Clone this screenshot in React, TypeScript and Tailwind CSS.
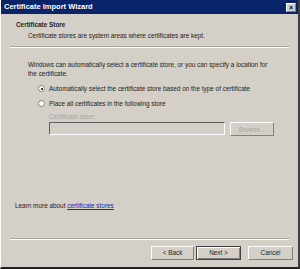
const font = { fontFamily: '"Liberation Sans", Arial, sans-serif' };

function Radio({ checked }: { checked?: boolean }) {
  return (
    <span className="relative inline-block h-[7px] w-[7px] shrink-0 rounded-full border border-[#808080] bg-white">
      {checked && (
        <span className="absolute left-[1.5px] top-[1.5px] h-[2px] w-[2px] rounded-full bg-black" />
      )}
    </span>
  );
}

function Btn({
  label,
  primary,
  disabled,
  className,
}: {
  label: string;
  primary?: boolean;
  disabled?: boolean;
  className?: string;
}) {
  return (
    <div
      className={`flex h-[14px] items-center justify-center border bg-[#d4d0c8] text-[6.4px] ${
        primary ? "border-[#404040] shadow-[inset_1px_1px_0_#fff,inset_-1px_-1px_0_#808080]" : "border-[#808080] border-l-white border-t-white"
      } ${disabled ? "text-[#a8a5a0]" : "text-[#222]"} ${className ?? ""}`}
    >
      {label}
    </div>
  );
}

export default function App() {
  return (
    <div
      className="flex h-[269px] w-[300px] flex-col border-b-2 border-r-2 border-b-[#202020] border-r-[#404040] border-l border-l-white bg-[#d4d0c8]"
      style={font}
    >
      <div className="flex h-[14px] items-center justify-between bg-[#0a246a] pl-[3px] pr-[2px]">
        <span className="text-[7.5px] font-bold text-white">Certificate Import Wizard</span>
        <span className="flex h-[9px] w-[10px] items-center justify-center border border-[#808080] border-l-white border-t-white bg-[#d4d0c8] text-[7px] font-bold leading-none text-black">
          ×
        </span>
      </div>

      <div className="px-[15px] pt-[6px] leading-[9px]">
        <div className="whitespace-nowrap text-[6.4px] font-bold text-[#222]">Certificate Store</div>
        <div className="mt-[2px] whitespace-nowrap pl-[12px] text-[6.4px] text-[#222]">
          Certificate stores are system areas where certificates are kept.
        </div>
      </div>

      <div className="mx-[9px] mt-[6px] h-[2px] border-t border-b border-t-[#a8a5a0] border-b-white" />

      <div className="pl-[27px] pr-[10px] pt-[12px] text-[6.4px] leading-[9px] text-[#222]">
        <p className="whitespace-nowrap">
          Windows can automatically select a certificate store, or you can specify a location for
          <br />
          the certificate.
        </p>
        <div className="mt-[6px] flex items-center gap-[4px] whitespace-nowrap pl-[10px]">
          <Radio checked />
          <span>Automatically select the certificate store based on the type of certificate</span>
        </div>
        <div className="mt-[6px] flex items-center gap-[4px] whitespace-nowrap pl-[10px]">
          <Radio />
          <span>Place all certificates in the following store</span>
        </div>
        <div className="mt-[4px] pl-[21px] text-[#a8a5a0]">Certificate store:</div>
        <div className="mt-[1px] flex gap-[5px] pl-[21px]">
          <div className="h-[13px] w-[176px] border border-[#606060] border-b-white border-r-white bg-[#d4d0c8]" />
          <Btn label="Browse..." disabled className="h-[13px] w-[44px]" />
        </div>
      </div>

      <div className="flex-1" />

      <div className="px-[14px] pb-[27px] text-[6.4px] text-[#222]">
        Learn more about <span className="text-[#2020c0] underline">certificate stores</span>
      </div>

      <div className="mx-[9px] h-[2px] border-t border-b border-t-[#a8a5a0] border-b-white" />

      <div className="flex justify-end gap-[2px] pb-[7px] pr-[5px] pt-[6px]">
        <Btn label="< Back" className="w-[43px]" />
        <Btn label="Next >" primary className="mr-[5px] w-[45px]" />
        <Btn label="Cancel" className="w-[45px]" />
      </div>
    </div>
  );
}
